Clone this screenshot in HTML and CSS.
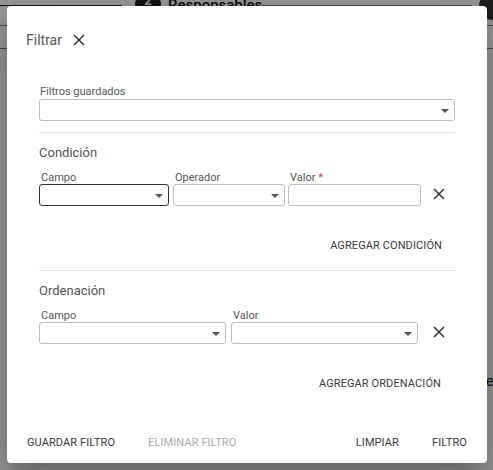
FILE: index.html
```html
<!DOCTYPE html>
<html lang="es">
<head>
<meta charset="utf-8">
<title>Filtrar</title>
<link rel="stylesheet" href="styles.css">
</head>
<body>
<div class="page">
  <div class="page-line page-line-a"></div>
  <div class="page-badge">2</div>
  <div class="page-title">Responsables</div>
  <div class="page-line page-line-b"></div>
  <div class="page-rule page-rule-1"></div>
  <div class="page-rule page-rule-2"></div>
  <div class="page-corner"></div>
  <div class="page-text">e</div>
</div>
<div class="overlay"></div>

<div class="dialog" role="dialog">
  <div class="dialog-title">
    <span>Filtrar</span>
    <svg class="icon-x" viewBox="0 0 12 12" width="12" height="12"><path d="M1 1L11 11M11 1L1 11" stroke="#333" stroke-width="1.5" fill="none"/></svg>
  </div>

  <div class="content">
    <div class="field saved">
      <label class="label">Filtros guardados</label>
      <div class="select w-full"><span class="arrow"></span></div>
    </div>

    <div class="divider d1"></div>

    <h3 class="section-title">Condición</h3>
    <div class="row">
      <div class="field">
        <label class="label">Campo</label>
        <div class="select focused w-c1"><span class="arrow"></span></div>
      </div>
      <div class="field">
        <label class="label">Operador</label>
        <div class="select w-c2"><span class="arrow"></span></div>
      </div>
      <div class="field">
        <label class="label">Valor <span class="req">*</span></label>
        <div class="select w-c3"></div>
      </div>
      <div class="remove">
        <svg class="icon-x" viewBox="0 0 12 12" width="12" height="12"><path d="M1 1L11 11M11 1L1 11" stroke="#333" stroke-width="1.5" fill="none"/></svg>
      </div>
    </div>
    <div class="add-row"><span class="btn">AGREGAR CONDICIÓN</span></div>

    <div class="divider d2"></div>

    <h3 class="section-title">Ordenación</h3>
    <div class="row">
      <div class="field">
        <label class="label">Campo</label>
        <div class="select w-o1"><span class="arrow"></span></div>
      </div>
      <div class="field gap-o">
        <label class="label">Valor</label>
        <div class="select w-o2"><span class="arrow"></span></div>
      </div>
      <div class="remove remove-o">
        <svg class="icon-x" viewBox="0 0 12 12" width="12" height="12"><path d="M1 1L11 11M11 1L1 11" stroke="#333" stroke-width="1.5" fill="none"/></svg>
      </div>
    </div>
    <div class="add-row"><span class="btn btn-o">AGREGAR ORDENACIÓN</span></div>
  </div>

  <div class="actions">
    <div class="actions-left">
      <span class="btn">GUARDAR FILTRO</span>
      <span class="btn disabled">ELIMINAR FILTRO</span>
    </div>
    <div class="actions-right">
      <span class="btn">LIMPIAR</span>
      <span class="btn">FILTRO</span>
    </div>
  </div>
</div>
</body>
</html>
```

FILE: styles.css
```css
* { box-sizing: border-box; }
html, body {
  margin: 0;
  padding: 0;
  width: 493px;
  height: 470px;
  overflow: hidden;
}
body {
  background: #ffffff;
  font-family: Roboto, "Liberation Sans", sans-serif;
  color: #555;
  position: relative;
}

/* page behind the overlay */
.page { position: absolute; inset: 0; }
.page-line { position: absolute; height: 1px; background: #222; }
.page-line-a { left: 0; top: 5px; width: 122px; }
.page-line-b { left: 262px; top: 5px; width: 210px; background: #777; }
.page-badge {
  position: absolute; left: 135px; top: -6px; width: 26px; height: 20px;
  border-radius: 10px; background: #222; color: #fff;
  font: bold 13px Roboto, sans-serif; text-align: center; line-height: 14px;
}
.page-title {
  position: absolute; left: 168px; top: -4px;
  font: 500 15px Roboto, sans-serif; color: #111;
}
.page-rule { position: absolute; height: 1px; background: #777; }
.page-rule-1 { left: 0; right: 0; top: 25px; }
.page-rule-2 { left: 0; right: 0; top: 48px; }
.page-corner {
  position: absolute; right: -14px; top: -8px; width: 28px; height: 28px;
  border-radius: 50%; background: #333;
}
.page-text {
  position: absolute; left: 486px; top: 373px; font: 14px Roboto, sans-serif; color: #111;
}
.overlay { position: absolute; inset: 0; background: rgba(0,0,0,0.4); }

/* dialog */
.dialog {
  position: absolute;
  left: 7px; top: 6px;
  width: 480px; height: 457px;
  background: #fff;
  border-radius: 4px;
  box-shadow: 0 11px 15px -7px rgba(0,0,0,.2), 0 24px 38px 3px rgba(0,0,0,.14), 0 9px 46px 8px rgba(0,0,0,.12);
  display: flex;
  flex-direction: column;
  padding: 26px 0 14px 0;
}
.dialog-title {
  display: flex;
  align-items: center;
  gap: 11px;
  padding-left: 19px;
  height: 16px;
  font-size: 14px;
  line-height: 16px;
  color: #555;
}
.content {
  padding: 0 32px;
  display: flex;
  flex-direction: column;
}
.field { display: flex; flex-direction: column; }
.saved { margin-top: 37px; }
.label {
  font-size: 11px;
  line-height: 13px;
  color: #555;
  padding-left: 2px;
  height: 13px;
}
.saved .label { margin-bottom: 1px; padding-left: 1px; }
.req { color: #e53935; }
.select {
  position: relative;
  height: 22px;
  border: 1px solid #bdbdbd;
  border-radius: 3px;
  background: #fff;
}
.select.focused { border-color: #333; }
.arrow {
  position: absolute;
  right: 5px; top: 9px;
  width: 0; height: 0;
  border-left: 4px solid transparent;
  border-right: 4px solid transparent;
  border-top: 4px solid #555;
}
.w-full { width: 416px; }
.w-c1 { width: 130px; }
.w-c2 { width: 112px; }
.w-c3 { width: 133px; }
.w-o1 { width: 187px; }
.w-o2 { width: 187px; }

.divider { height: 1px; background: #e3e3e3; width: 416px; }
.d1 { margin-top: 11px; }
.d2 { margin-top: 18px; }

.section-title {
  margin: 12px 0 0 0;
  font-size: 13px;
  line-height: 16px;
  font-weight: 400;
  color: #555;
}
.row {
  display: flex;
  align-items: flex-end;
  gap: 4px;
  margin-top: 10px;
}
.row .field:nth-child(3) { margin-left: -1px; }
.gap-o { margin-left: 1px; }
.remove {
  height: 22px;
  display: flex;
  align-items: center;
  padding-left: 8px;
  padding-bottom: 3px;
}
.remove-o { padding-left: 11px; }

.add-row {
  display: flex;
  justify-content: flex-end;
  margin-top: 33px;
  padding-right: 13px;
}
.btn {
  font-size: 11px;
  line-height: 13px;
  font-weight: 400;
  letter-spacing: 0.1px;
  color: #3a3a3a;
  white-space: nowrap;
}
.btn-o { margin-right: 1px; }
.btn.disabled { color: #aaa; }

.actions {
  margin-top: auto;
  display: flex;
  justify-content: space-between;
  padding: 0 20px;
}
.actions-left, .actions-right { display: flex; gap: 33px; }
```
